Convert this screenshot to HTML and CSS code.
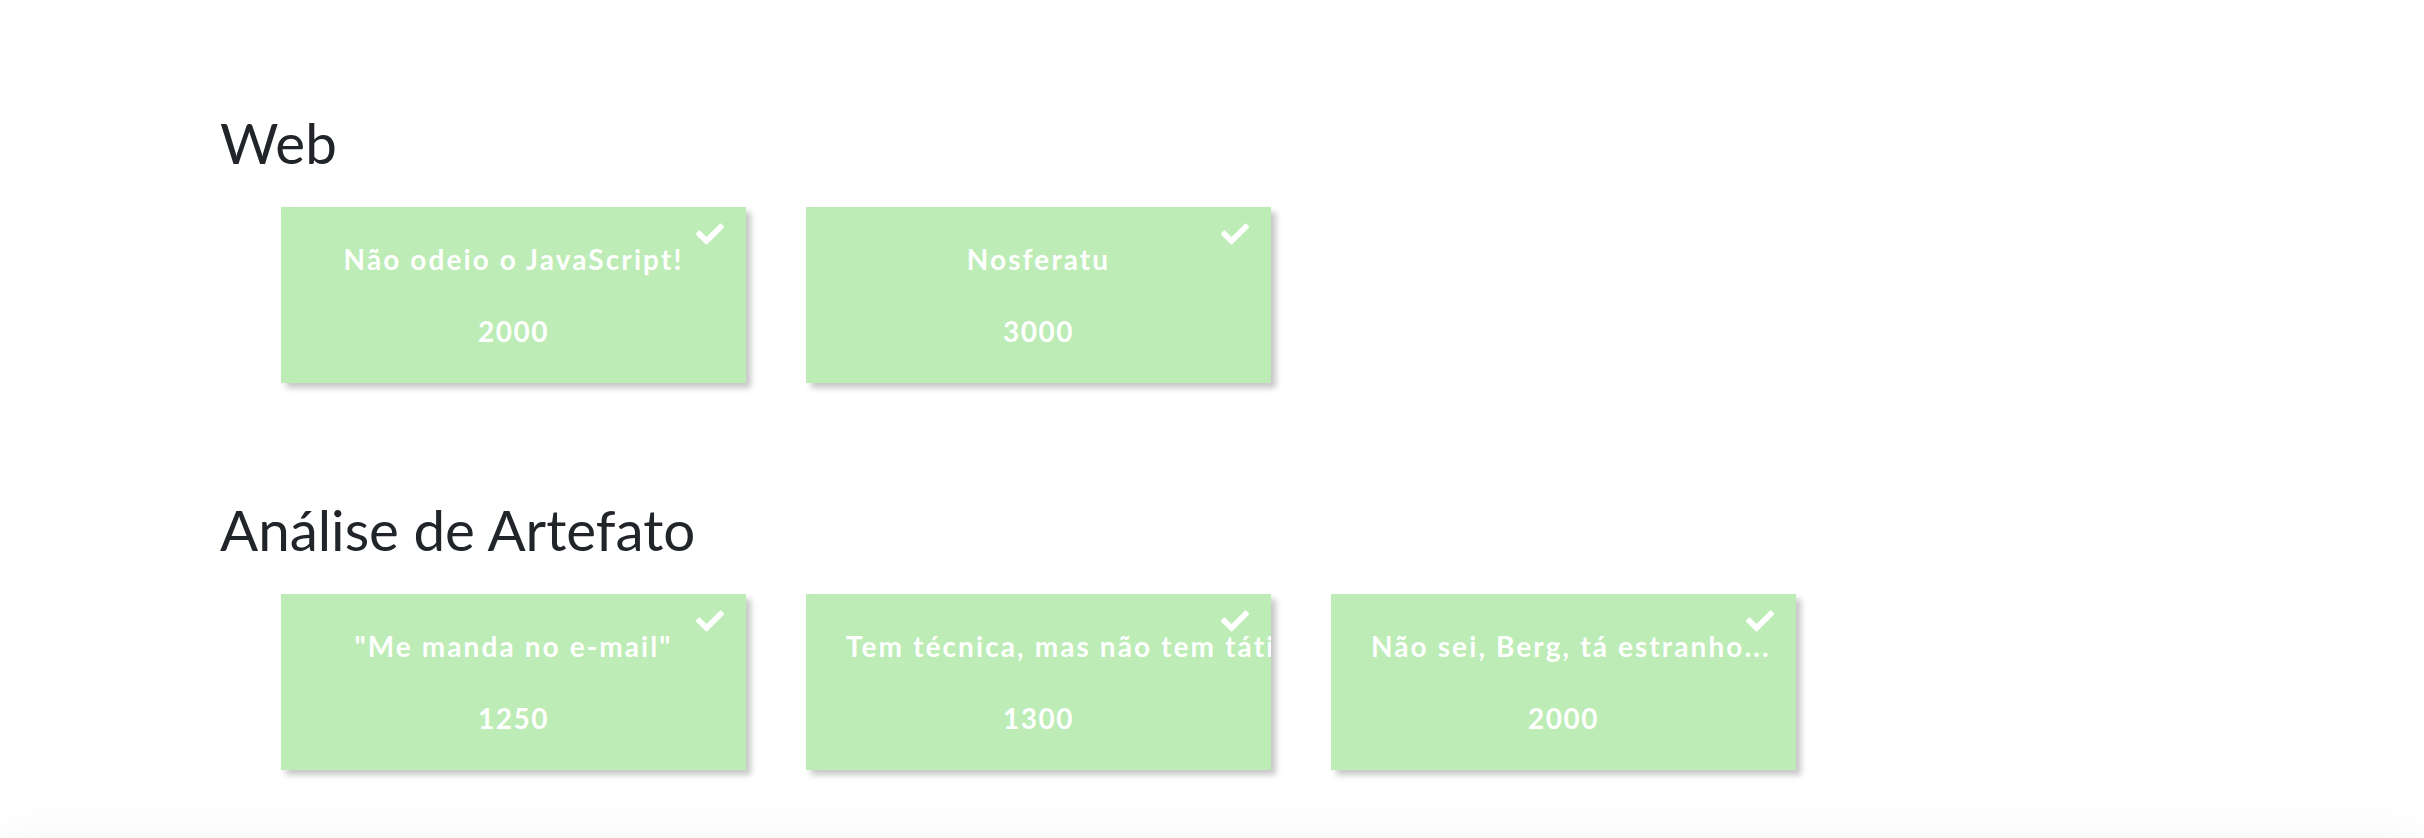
FILE: index.html
```html
<!DOCTYPE html>
<html lang="pt-BR">
<head>
<meta charset="utf-8">
<title>Desafios</title>
<link rel="stylesheet" href="styles.css">
</head>
<body>
<main class="page">
  <section class="category">
    <h2 class="category-title">Web</h2>
    <div class="cards">
      <div class="card solved">
        <svg class="check" viewBox="0 0 512 512"><path d="M173.898 439.404l-166.4-166.4c-9.997-9.997-9.997-26.206 0-36.204l36.203-36.204c9.997-9.998 26.207-9.998 36.204 0L192 312.69 432.095 72.596c9.997-9.997 26.207-9.997 36.204 0l36.203 36.204c9.997 9.997 9.997 26.206 0 36.204l-294.4 294.401c-9.998 9.997-26.207 9.997-36.204-.001z"/></svg>
        <div class="card-title">Não odeio o JavaScript!</div>
        <div class="card-points">2000</div>
      </div>
      <div class="card solved">
        <svg class="check" viewBox="0 0 512 512"><path d="M173.898 439.404l-166.4-166.4c-9.997-9.997-9.997-26.206 0-36.204l36.203-36.204c9.997-9.998 26.207-9.998 36.204 0L192 312.69 432.095 72.596c9.997-9.997 26.207-9.997 36.204 0l36.203 36.204c9.997 9.997 9.997 26.206 0 36.204l-294.4 294.401c-9.998 9.997-26.207 9.997-36.204-.001z"/></svg>
        <div class="card-title">Nosferatu</div>
        <div class="card-points">3000</div>
      </div>
    </div>
  </section>
  <section class="category">
    <h2 class="category-title">Análise de Artefato</h2>
    <div class="cards">
      <div class="card solved">
        <svg class="check" viewBox="0 0 512 512"><path d="M173.898 439.404l-166.4-166.4c-9.997-9.997-9.997-26.206 0-36.204l36.203-36.204c9.997-9.998 26.207-9.998 36.204 0L192 312.69 432.095 72.596c9.997-9.997 26.207-9.997 36.204 0l36.203 36.204c9.997 9.997 9.997 26.206 0 36.204l-294.4 294.401c-9.998 9.997-26.207 9.997-36.204-.001z"/></svg>
        <div class="card-title">"Me manda no e-mail"</div>
        <div class="card-points">1250</div>
      </div>
      <div class="card solved">
        <svg class="check" viewBox="0 0 512 512"><path d="M173.898 439.404l-166.4-166.4c-9.997-9.997-9.997-26.206 0-36.204l36.203-36.204c9.997-9.998 26.207-9.998 36.204 0L192 312.69 432.095 72.596c9.997-9.997 26.207-9.997 36.204 0l36.203 36.204c9.997 9.997 9.997 26.206 0 36.204l-294.4 294.401c-9.998 9.997-26.207 9.997-36.204-.001z"/></svg>
        <div class="card-title">Tem técnica, mas não tem tática</div>
        <div class="card-points">1300</div>
      </div>
      <div class="card solved">
        <svg class="check" viewBox="0 0 512 512"><path d="M173.898 439.404l-166.4-166.4c-9.997-9.997-9.997-26.206 0-36.204l36.203-36.204c9.997-9.998 26.207-9.998 36.204 0L192 312.69 432.095 72.596c9.997-9.997 26.207-9.997 36.204 0l36.203 36.204c9.997 9.997 9.997 26.206 0 36.204l-294.4 294.401c-9.998 9.997-26.207 9.997-36.204-.001z"/></svg>
        <div class="card-title">Não sei, Berg, tá estranho...</div>
        <div class="card-points">2000</div>
      </div>
    </div>
  </section>
</main>
<footer class="footer"></footer>
</body>
</html>
```
FILE: styles.css
```css
html, body {
  margin: 0;
  padding: 0;
  background: #ffffff;
}

body {
  font-family: Lato, "Open Sans", "Liberation Sans", sans-serif;
  color: #212529;
}

.page {
  padding: 109px 0 0 220px;
  display: flex;
  flex-direction: column;
  gap: 113px;
}

.category-title {
  margin: 0;
  font-size: 56.5px;
  font-weight: 400;
  line-height: 1.2;
  color: #212529;
}

.cards {
  display: flex;
  gap: 60px;
  margin: 30px 0 0 61px;
}

.card {
  position: relative;
  box-sizing: border-box;
  width: 465px;
  height: 176px;
  padding: 31px 40px;
  background: #bdecb6;
  box-shadow: 5px 5px 6px rgba(0, 0, 0, 0.22);
  overflow: hidden;
  color: #ffffff;
  font-weight: 700;
  font-size: 28px;
  text-align: center;
}

.card-title,
.card-points {
  line-height: 42px;
  white-space: nowrap;
}

.card-title {
  letter-spacing: 2.1px;
}

.card-points {
  margin-top: 30px;
  letter-spacing: 1.5px;
}

.check {
  position: absolute;
  top: 13px;
  right: 22px;
  width: 28px;
  height: 28px;
  fill: #ffffff;
}

.footer {
  margin-top: 71px;
  height: 120px;
  background: #ffffff;
  border-radius: 30px 30px 0 0;
  box-shadow: 0 0 60px rgba(0, 0, 0, 0.05);
}
```
